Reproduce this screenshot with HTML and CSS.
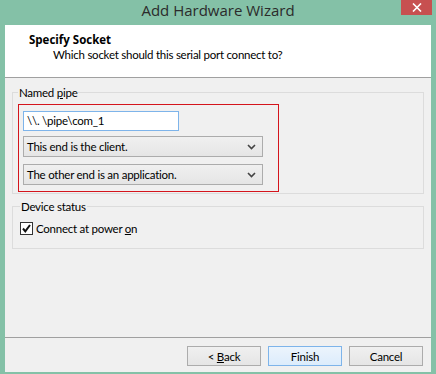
FILE: index.html
```html
<!DOCTYPE html>
<html lang="en">
<head>
    <meta charset="UTF-8">
    <title>Add Hardware Wizard</title>
    <link rel="stylesheet" href="styles.css">
</head>
<body>
    <div class="window">
        <div class="titlebar">
            <span></span>
            <span class="title">Add Hardware Wizard</span>
            <div class="close">
                <svg width="10" height="9" viewBox="0 0 10 9">
                    <path d="M1 0.5 L9 8.5 M9 0.5 L1 8.5" stroke="#fff" stroke-width="1.6" fill="none"/>
                </svg>
            </div>
        </div>

        <div class="client">
            <div class="wiz-head">
                <div class="head-title">Specify Socket</div>
                <div class="head-sub">Which socket should this serial port connect to?</div>
            </div>

            <div class="wiz-body">
                <fieldset class="group">
                    <legend>Named <u>p</u>ipe</legend>
                    <div class="marked">
                        <div class="textbox">\\. \pipe\com_1</div>
                        <div class="combo combo-first">
                            <span>This end is the client.</span>
                            <svg width="9" height="6" viewBox="0 0 9 6"><path d="M1 1 L4.5 4.5 L8 1" stroke="#444" stroke-width="1.6" fill="none"/></svg>
                        </div>
                        <div class="combo combo-second">
                            <span>The other end is an application.</span>
                            <svg width="9" height="6" viewBox="0 0 9 6"><path d="M1 1 L4.5 4.5 L8 1" stroke="#444" stroke-width="1.6" fill="none"/></svg>
                        </div>
                    </div>
                </fieldset>

                <fieldset class="group group-status">
                    <legend>Device status</legend>
                    <div class="check-row">
                        <span class="checkbox">
                            <svg width="11" height="11" viewBox="0 0 11 11"><path d="M2 5.5 L4.3 8.3 L9 2" stroke="#111" stroke-width="2" fill="none"/></svg>
                        </span>
                        <span>Connect at power <u>o</u>n</span>
                    </div>
                </fieldset>
            </div>

            <div class="wiz-foot">
                <button class="btn">&lt; <u>B</u>ack</button>
                <button class="btn btn-default">Finish</button>
                <button class="btn">Cancel</button>
            </div>
        </div>
    </div>
</body>
</html>
```

FILE: styles.css
```css
body {
    margin: 0;
    padding: 0;
    background: #84c1a7;
    font-family: Lato, "Open Sans", sans-serif;
    font-size: 11.5px;
    letter-spacing: -0.25px;
    color: #000;
}
.window {
    width: 436px;
    height: 374px;
    display: flex;
    flex-direction: column;
}
.titlebar {
    height: 25px;
    display: grid;
    grid-template-columns: 1fr auto 1fr;
}
.title {
    font-family: "Open Sans", sans-serif;
    font-size: 15px;
    letter-spacing: 0;
    line-height: 21px;
    color: #2b2b2b;
}
.close {
    justify-self: end;
    width: 31px;
    height: 15px;
    margin-right: 4px;
    background: #c75050;
    display: flex;
    align-items: center;
    justify-content: center;
}
.client {
    flex: 1;
    margin: 0 5px 2px;
    background: #f0f0f0;
    display: flex;
    flex-direction: column;
}
.wiz-head {
    background: #fff;
    border-bottom: 1px solid #a0a0a0;
    padding-top: 7px;
    box-sizing: border-box;
    height: 53px;
}
.head-title {
    font-family: "Open Sans", sans-serif;
    font-size: 11.5px;
    font-weight: bold;
    letter-spacing: 0;
    line-height: 15px;
    padding-left: 24px;
}
.head-sub {
    line-height: 15px;
    padding-left: 48px;
}
.wiz-body {
    flex: 1;
    padding: 0 7px;
}
.group {
    margin: 7px 0 0;
    padding: 4px 5px 1px;
    border: 1px solid #dcdcdc;
    min-width: 0;
}
.group legend {
    padding: 0 1px;
    line-height: 15px;
}
.group-status {
    margin-top: 5px;
    padding: 8px 7px 13px;
}
.marked {
    width: 261px;
    box-sizing: border-box;
    border: 1px solid #d4141c;
    padding: 6px 4px;
}
.textbox {
    width: 156px;
    height: 20px;
    box-sizing: border-box;
    border: 1px solid #7eb4ea;
    background: #fff;
    padding-left: 3px;
    line-height: 18px;
}
.combo {
    width: 240px;
    height: 21px;
    box-sizing: border-box;
    border: 1px solid #acacac;
    background: linear-gradient(#f0f0f0, #e5e5e5);
    display: flex;
    align-items: center;
    justify-content: space-between;
    padding: 0 6px 0 3px;
}
.combo-first {
    margin-top: 5px;
}
.combo-second {
    margin-top: 7px;
}
.check-row {
    display: flex;
    align-items: center;
    gap: 3px;
    line-height: 13px;
}
.checkbox {
    width: 13px;
    height: 13px;
    box-sizing: border-box;
    border: 1px solid #333;
    background: #fff;
    display: flex;
    align-items: center;
    justify-content: center;
}
.wiz-foot {
    border-top: 1px solid #a0a0a0;
    padding: 8px 8px 6px;
    display: flex;
    justify-content: flex-end;
    gap: 7px;
}
.btn {
    width: 74px;
    height: 20px;
    margin: 0;
    padding: 0;
    border: 1px solid #acacac;
    background: linear-gradient(#f0f0f0, #e5e5e5);
    font-family: inherit;
    font-size: 11.5px;
    letter-spacing: inherit;
    color: #000;
}
.btn-default {
    border-color: #7eb4ea;
    background: linear-gradient(#ecf4fc, #dcecfc);
}
```
